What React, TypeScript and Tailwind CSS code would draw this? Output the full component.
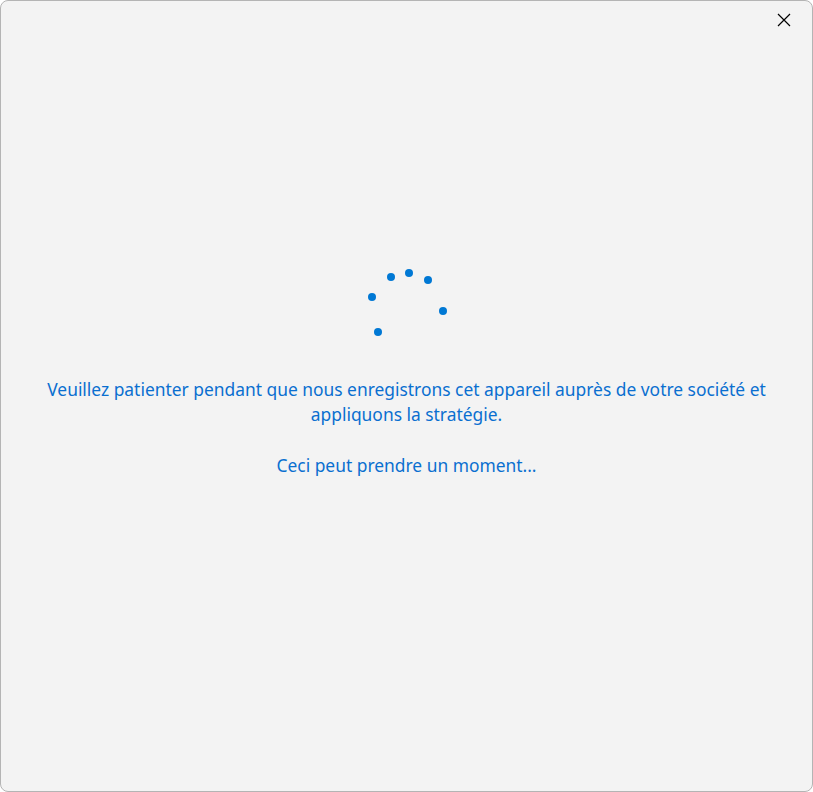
const dots: [number, number][] = [
  [391, 276],
  [409, 272],
  [428, 279],
  [372, 296],
  [443, 310],
  [378, 331],
];

const Spinner = () => (
  <svg width="80" height="80" viewBox="367 267 80 80" className="text-[#0078d4] fill-current">
    {dots.map(([x, y]) => (
      <circle key={`${x}-${y}`} cx={x} cy={y} r="4" />
    ))}
  </svg>
);

export default function App() {
  return (
    <div className="w-[813px] h-[792px] bg-white">
      <div
        className="relative w-full h-full rounded-lg border border-[#b4b4b4] bg-[#f3f3f3] flex flex-col items-center"
        style={{ fontFamily: '"Noto Sans", "Open Sans", sans-serif' }}
      >
        <button className="absolute top-[7px] right-[16px] w-6 h-6 flex items-center justify-center text-black">
          <svg width="14" height="14" viewBox="0 0 14 14" stroke="currentColor" strokeWidth="1.2">
            <path d="M1 1 L13 13 M13 1 L1 13" />
          </svg>
        </button>
        <div className="mt-[267px]">
          <Spinner />
        </div>
        <div className="mt-[29px] px-8 text-center text-[17.4px] leading-[25px] text-[#0a6fd0]">
          <p>Veuillez patienter pendant que nous enregistrons cet appareil auprès de votre société et appliquons la stratégie.</p>
          <p className="mt-[26px]">Ceci peut prendre un moment...</p>
        </div>
      </div>
    </div>
  );
}
